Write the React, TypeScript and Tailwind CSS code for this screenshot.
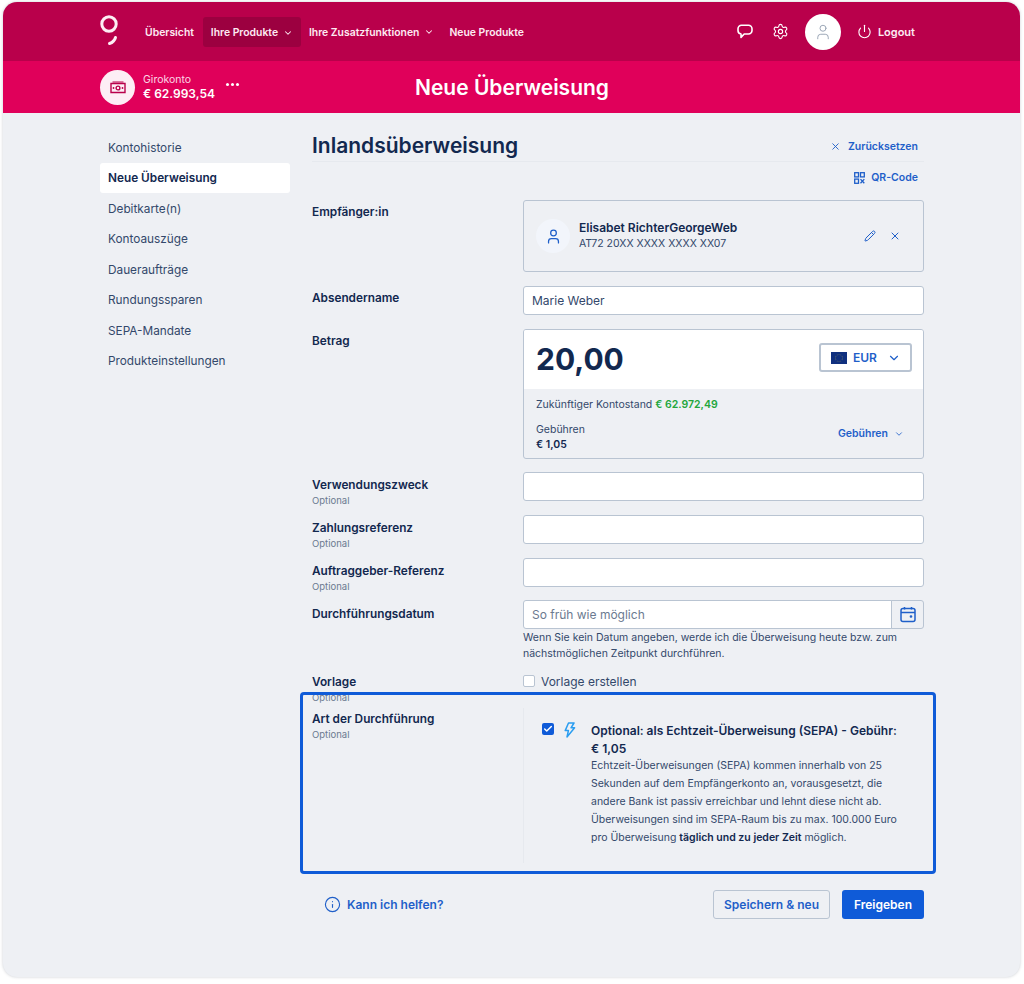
import { Check, ChevronDown, Info, Pencil, Power, Settings, User, X } from "lucide-react";

const sideItems = ["Kontohistorie", "Neue Überweisung", "Debitkarte(n)", "Kontoauszüge", "Daueraufträge", "Rundungssparen", "SEPA-Mandate", "Produkteinstellungen"];

function Label({ text, optional }: { text: string; optional?: boolean }) {
  return (
    <div className="w-[211px] shrink-0">
      <div className="text-[11.8px] leading-[18px] font-semibold text-[#12284f]">{text}</div>
      {optional && <div className="text-[9.5px] leading-[14px] text-[#6b7a90]">Optional</div>}
    </div>
  );
}

function TextRow({ label }: { label: string }) {
  return (
    <div className="flex h-[43px]">
      <Label text={label} optional />
      <div className="flex-1 h-[29px] -mt-[4px] bg-white rounded-[3px] border border-[#b9c4d2]" />
    </div>
  );
}

function EuFlag() {
  const dots = [0, 1, 2, 3, 4, 5, 6, 7, 8, 9, 10, 11];
  return (
    <svg width="16" height="12" viewBox="0 0 16 12" className="shrink-0">
      <rect width="16" height="12" fill="#10307f" />
      {dots.map((d) => (
        <circle key={d} cx={8 + 3.6 * Math.cos((d * Math.PI) / 6)} cy={6 + 3.6 * Math.sin((d * Math.PI) / 6)} r="0.45" fill="#8a8f5a" />
      ))}
    </svg>
  );
}

function MoneyIcon() {
  return (
    <svg width="16" height="13" viewBox="0 0 16 13" fill="none" stroke="#b9004b" strokeWidth="1.4">
      <path d="M1 2.5h14v9H1z" />
      <path d="M2.5 1h11" strokeWidth="1" />
      <circle cx="8" cy="7" r="1.9" />
      <path d="M3.5 7h.01M12.5 7h.01" strokeLinecap="round" strokeWidth="1.8" />
    </svg>
  );
}

function ChatIcon() {
  return (
    <svg width="16" height="15" viewBox="0 0 16 15" fill="none" stroke="currentColor" strokeWidth="1.6" strokeLinejoin="round" className="shrink-0">
      <path d="M4.5 1.2h7a3.5 3.5 0 0 1 3.5 3.5v1.8a3.5 3.5 0 0 1-3.5 3.5H7.2L4 13.4v-3.4a3.4 3.4 0 0 1-3-3.4V4.7a3.5 3.5 0 0 1 3.5-3.5z" />
    </svg>
  );
}

function QrIcon() {
  return (
    <svg width="11" height="12" viewBox="0 0 11 12" fill="none" stroke="currentColor" strokeWidth="1.3" className="shrink-0">
      <rect x="0.7" y="0.7" width="3.8" height="4.2" />
      <rect x="6.5" y="0.7" width="3.8" height="4.2" />
      <rect x="0.7" y="7.1" width="3.8" height="4.2" />
      <path d="M6.5 7.1l3.8 4.2M10.3 7.1l-3.8 4.2" />
    </svg>
  );
}

function BoltIcon() {
  return (
    <svg width="12" height="16" viewBox="0 0 12 16" fill="none" stroke="#2a9df0" strokeWidth="1.5" strokeLinejoin="round" className="ml-[10px] -mt-[1px] shrink-0">
      <path d="M4.5 1L1.2 8.6h3.2L3 15l7.6-9.2H7L10 1z" />
    </svg>
  );
}

export default function App() {
  return (
    <div className="w-[1024px] h-[984px] bg-white pt-[2px] pl-[3px] pr-[4px] pb-[7px] font-['Inter',sans-serif]">
      <div className="h-full rounded-[14px] overflow-hidden bg-[#eef0f4] shadow-[0_0_3px_rgba(40,50,70,0.25)] flex flex-col">
        {/* top nav */}
        <header className="h-[59px] shrink-0 bg-[#b9004b] flex items-center pl-[95px] pr-[105px] text-white">
          <svg width="22" height="32" viewBox="0 0 22 32" fill="none" stroke="#fdeef4" strokeWidth="3" strokeLinecap="round" className="-mt-[1px] mr-[25px] shrink-0">
            <circle cx="11" cy="9" r="7.2" />
            <path d="M17.5 22.5c-.8 2.8-3 5-6 6" />
          </svg>
          <nav className="flex items-center text-[10.4px] font-semibold text-[#fdeaf2]">
            <span className="mt-[2px]">Übersicht</span>
            <span className="ml-[9px] h-[30px] w-[98px] bg-[#9c0040] rounded-[3px] flex items-center justify-center gap-[5px] pt-[2px]">
              Ihre Produkte <ChevronDown size={10} strokeWidth={2.5} />
            </span>
            <span className="ml-[8px] mt-[2px] flex items-center gap-[5px]">
              Ihre Zusatzfunktionen <ChevronDown size={10} strokeWidth={2.5} />
            </span>
            <span className="ml-[15px] mt-[2px]">Neue Produkte</span>
          </nav>
          <div className="ml-auto flex items-center">
            <ChatIcon />
            <Settings size={17} strokeWidth={1.6} className="ml-[19px]" />
            <span className="ml-[16px] w-[36px] h-[36px] rounded-full bg-white flex items-center justify-center">
              <User size={18} strokeWidth={1.3} className="text-[#9aa6b6]" />
            </span>
            <Power size={15} strokeWidth={1.8} className="ml-[16px]" />
            <span className="ml-[6px] mt-[1px] text-[11px] font-semibold text-[#fdeaf2]">Logout</span>
          </div>
        </header>

        {/* account bar */}
        <div className="relative h-[52px] shrink-0 bg-[#e0005a] flex items-center pl-[97px] text-white">
          <span className="w-[35px] h-[35px] rounded-full bg-[#fdeef5] flex items-center justify-center">
            <MoneyIcon />
          </span>
          <div className="ml-[8px] mt-[2px]">
            <div className="text-[10.5px] leading-[12px] text-[#fcd5e5]">Girokonto</div>
            <div className="text-[12px] leading-[16px] font-semibold">€ 62.993,54</div>
          </div>
          <div className="ml-[11px] -mt-[5px] flex gap-[2px]">
            <i className="w-[3px] h-[3px] rounded-full bg-white" />
            <i className="w-[3px] h-[3px] rounded-full bg-white" />
            <i className="w-[3px] h-[3px] rounded-full bg-white" />
          </div>
          <h1 className="absolute inset-x-0 text-center text-[21px] font-semibold pl-[1px] mt-[1px]">Neue Überweisung</h1>
        </div>

        {/* body */}
        <div className="flex pl-[97px] pt-[19px]">
          <aside className="w-[190px] shrink-0">
            {sideItems.map((item, i) => (
              <div
                key={item}
                className={
                  i === 1
                    ? "h-[30.5px] pl-[8px] pt-[3px] flex items-center text-[11.8px] font-semibold text-[#12284f] bg-white rounded-[3px]"
                    : "h-[30.5px] pl-[8px] pt-[3px] flex items-center text-[11.8px] text-[#33486b]"
                }
              >
                {item}
              </div>
            ))}
          </aside>

          <main className="ml-[22px] w-[612px]">
            <div className="h-[30px] flex items-center justify-between border-b border-[#e6e9ee]">
              <h2 className="text-[21px] font-semibold text-[#12284f] -mt-[1px]">Inlandsüberweisung</h2>
              <span className="pr-[6px] flex items-center gap-[7px] text-[10.5px] font-semibold text-[#1f5fc9]">
                <X size={11} strokeWidth={2} /> Zurücksetzen
              </span>
            </div>
            <div className="h-[31px] flex items-center justify-end pr-[6px] gap-[6px] text-[10.5px] font-semibold text-[#1f5fc9]">
              <QrIcon /> QR-Code
            </div>

            {/* Empfänger */}
            <div className="flex mt-[7px] pt-[1px]">
              <div className="pt-[2px]"><Label text="Empfänger:in" /></div>
              <div className="flex-1 h-[72px] -mt-[1px] rounded-[3px] border border-[#b9c4d2] flex items-center pl-[12px] pr-[22px]">
                <span className="w-[34px] h-[34px] rounded-full bg-[#f2f5fb] flex items-center justify-center text-[#1f5fc9]">
                  <User size={17} strokeWidth={1.8} />
                </span>
                <div className="ml-[9px] -mt-[1px]">
                  <div className="text-[12px] leading-[17px] font-semibold text-[#12284f]">Elisabet RichterGeorgeWeb</div>
                  <div className="text-[10.5px] leading-[16px] text-[#33486b]">AT72 20XX XXXX XXXX XX07</div>
                </div>
                <Pencil size={12} strokeWidth={2} className="ml-auto text-[#1f5fc9]" />
                <X size={12} strokeWidth={2} className="ml-[13px] text-[#1f5fc9]" />
              </div>
            </div>

            {/* Absendername */}
            <div className="flex mt-[14px]">
              <div className="pt-[3px]"><Label text="Absendername" /></div>
              <div className="flex-1 h-[29px] px-[8px] flex items-center bg-white rounded-[3px] border border-[#b9c4d2] text-[12px] text-[#33486b]">Marie Weber</div>
            </div>

            {/* Betrag */}
            <div className="flex mt-[14px]">
              <div className="pt-[3px]"><Label text="Betrag" /></div>
              <div className="flex-1 h-[130px] rounded-[3px] border border-[#b9c4d2] overflow-hidden">
                <div className="h-[59px] bg-white flex items-center pl-[12px] pr-[11px] justify-between">
                  <span className="text-[30px] font-bold text-[#12284f] leading-none mb-[2px]">20,00</span>
                  <span className="w-[93px] h-[29px] mb-[4px] rounded-[3px] border-2 border-[#b9c4d2] flex items-center pl-[10px] gap-[6px] text-[12px] font-semibold text-[#1f5fc9]">
                    <EuFlag /> EUR <ChevronDown size={14} strokeWidth={2} className="ml-[4px]" />
                  </span>
                </div>
                <div className="pl-[12px] pr-[19px] pt-[8px] text-[10.5px] text-[#33486b]">
                  <div className="leading-[16px]">
                    Zukünftiger Kontostand <span className="font-semibold text-[#22a63c]">€ 62.972,49</span>
                  </div>
                  <div className="mt-[9px] flex items-center justify-between">
                    <div>
                      <div className="leading-[15px]">Gebühren</div>
                      <div className="leading-[16px] font-semibold text-[#12284f]">€ 1,05</div>
                    </div>
                    <span className="mb-[8px] flex items-center gap-[6px] font-semibold text-[#1f5fc9]">
                      Gebühren <ChevronDown size={10} strokeWidth={2} />
                    </span>
                  </div>
                </div>
              </div>
            </div>

            <div className="mt-[17px]">
              <TextRow label="Verwendungszweck" />
              <TextRow label="Zahlungsreferenz" />
              <TextRow label="Auftraggeber-Referenz" />
            </div>

            {/* Durchführungsdatum */}
            <div className="flex">
              <Label text="Durchführungsdatum" />
              <div className="flex-1 -mt-[5px]">
                <div className="flex h-[29px]">
                  <div className="flex-1 px-[8px] flex items-center bg-white rounded-l-[3px] border border-[#b9c4d2] text-[12px] text-[#6b7a90]">So früh wie möglich</div>
                  <div className="w-[33px] -ml-[1px] flex items-center justify-center rounded-r-[3px] border border-[#b9c4d2] text-[#1f5fc9]">
                    <svg width="16" height="17" viewBox="0 0 16 17" fill="none" stroke="currentColor" strokeWidth="1.5">
                      <rect x="1" y="2.5" width="14" height="13" rx="2" />
                      <path d="M1 6.5h14M4.5 1v2.5M11.5 1v2.5" />
                      <circle cx="11" cy="10.5" r="0.6" fill="currentColor" />
                    </svg>
                  </div>
                </div>
                <p className="mt-[1px] text-[10.5px] leading-[15.5px] text-[#33486b] w-[385px]">
                  Wenn Sie kein Datum angeben, werde ich die Überweisung heute bzw. zum nächstmöglichen Zeitpunkt durchführen.
                </p>
              </div>
            </div>

            {/* Vorlage */}
            <div className="flex mt-[12px] h-[20px]">
              <Label text="Vorlage" optional />
              <label className="flex items-center gap-[6px] h-[18px] text-[12px] text-[#33486b]">
                <span className="w-[12px] h-[12px] -mt-[2px] bg-white rounded-[2px] border border-[#b9c4d2]" />
                Vorlage erstellen
              </label>
            </div>

            {/* Echtzeit highlight, the box lies over the Optional of the row above */}
            <div className="relative -ml-[12px] w-[636px] h-[182px] -mt-[1px] rounded-[4px] border-[3px] border-[#0f5bd8] flex pl-[9px]">
              <div className="pt-[15px]"><Label text="Art der Durchführung" optional /></div>
              <div className="flex-1 mt-[13px] mb-[8px] border-l border-[#e6e9ee] flex pl-[18px] pt-[15px]">
                <span className="w-[12px] h-[12px] shrink-0 bg-[#0f5bd8] rounded-[2px] flex items-center justify-center text-white">
                  <Check size={10} strokeWidth={3.5} />
                </span>
                <BoltIcon />
                <div className="ml-[15px] w-[312px] -mt-[1px]">
                  <div className="text-[12px] leading-[18px] font-semibold text-[#12284f]">Optional: als Echtzeit-Überweisung (SEPA) - Gebühr: € 1,05</div>
                  <p className="-mt-[1px] text-[10.5px] leading-[18px] text-[#33486b]">
                    Echtzeit-Überweisungen (SEPA) kommen innerhalb von 25 Sekunden auf dem Empfängerkonto an, vorausgesetzt, die andere Bank ist passiv erreichbar und lehnt diese nicht ab. Überweisungen sind im SEPA-Raum bis zu max. 100.000 Euro pro Überweisung <b className="font-semibold text-[#12284f]">täglich und zu jeder Zeit</b> möglich.
                  </p>
                </div>
              </div>
            </div>

            {/* actions */}
            <div className="mt-[16px] flex items-center">
              <Info size={17} strokeWidth={1.6} className="ml-[12px] text-[#1f5fc9]" />
              <span className="ml-[6px] text-[12px] font-semibold text-[#1f5fc9]">Kann ich helfen?</span>
              <span className="ml-auto w-[117px] h-[29px] rounded-[3px] border border-[#b9c4d2] flex items-center justify-center text-[12px] font-semibold text-[#1f5fc9]">Speichern &amp; neu</span>
              <span className="ml-[12px] w-[82px] h-[29px] rounded-[3px] bg-[#0f5bd8] flex items-center justify-center text-[12px] font-semibold text-white">Freigeben</span>
            </div>
          </main>
        </div>
      </div>
    </div>
  );
}
